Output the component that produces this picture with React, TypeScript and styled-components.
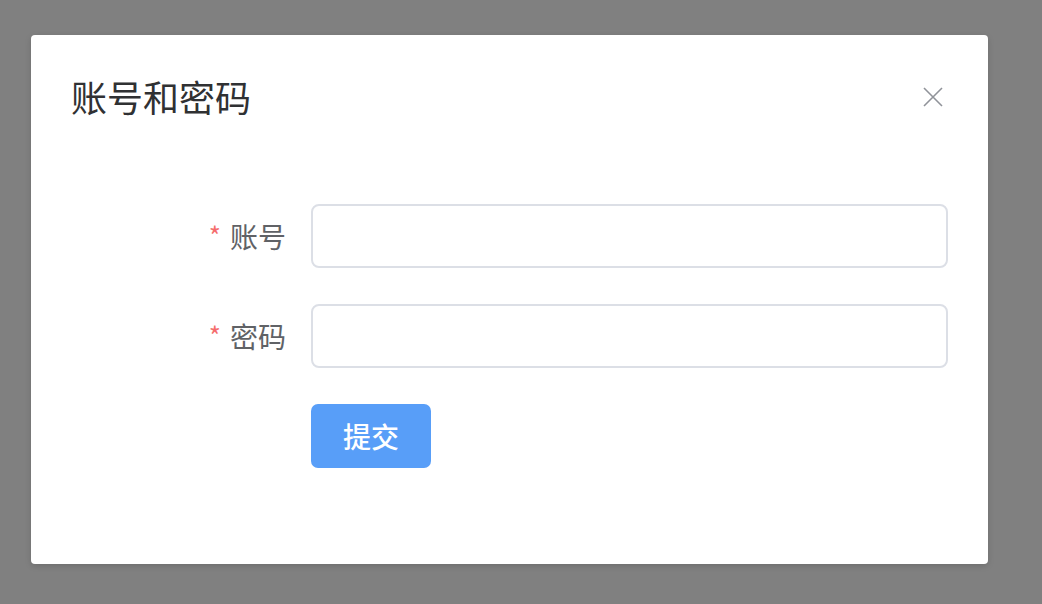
import React from "react";
import styled, { createGlobalStyle } from "styled-components";

const Global = createGlobalStyle`
  html, body { margin: 0; padding: 0; }
  body { background: #808080; font-family: "Noto Sans CJK SC", "Noto Sans", sans-serif; }
`;

const Overlay = styled.div`
  width: 1042px;
  height: 604px;
  background: #808080;
  padding: 35px 0 0 31px;
  box-sizing: border-box;
  overflow: hidden;
`;

const Dialog = styled.div`
  width: 957px;
  height: 529px;
  background: #ffffff;
  border-radius: 4px;
  box-shadow: 0 2px 6px rgba(0, 0, 0, 0.15);
  box-sizing: border-box;
  display: flex;
  flex-direction: column;
`;

const Header = styled.div`
  display: flex;
  align-items: center;
  justify-content: space-between;
  height: 36px;
  padding: 43px 45px 0 40px;
`;

const Title = styled.h2`
  margin: 0;
  font-size: 36px;
  line-height: 36px;
  font-weight: 400;
  color: #303133;
`;

const CloseButton = styled.button`
  border: none;
  background: none;
  padding: 0;
  width: 20px;
  height: 20px;
  margin-top: 2px;
  display: flex;
  cursor: pointer;
`;

const Form = styled.form`
  display: flex;
  flex-direction: column;
  gap: 36px;
  padding: 90px 40px 0 40px;
`;

const Row = styled.div`
  display: flex;
  align-items: center;
  height: 64px;
`;

const Label = styled.label`
  width: 240px;
  height: 64px;
  padding-right: 25px;
  box-sizing: border-box;
  display: flex;
  align-items: center;
  justify-content: flex-end;
  font-size: 28px;
  line-height: 1;
  color: #606266;
`;

const Star = styled.span`
  color: #f56c6c;
  font-size: 26px;
  margin-right: 9px;
  position: relative;
  top: -1px;
`;

const Input = styled.input`
  flex: 1;
  height: 64px;
  box-sizing: border-box;
  border: 2px solid #dcdfe6;
  border-radius: 8px;
  outline: none;
  font-size: 24px;
  padding: 0 24px;
  background: #fff;
`;

const Actions = styled.div`
  display: flex;
  padding-left: 240px;
`;

const Submit = styled.button`
  width: 120px;
  height: 64px;
  border: none;
  border-radius: 7px;
  background: #589ef8;
  color: #ffffff;
  font-family: "Noto Sans CJK SC", "Noto Sans", sans-serif;
  font-size: 28px;
  font-weight: 500;
  line-height: 1;
  padding: 0;
  cursor: pointer;
`;

export default function App() {
  return (
    <>
      <Global />
      <Overlay>
        <Dialog>
          <Header>
            <Title>账号和密码</Title>
            <CloseButton aria-label="关闭">
              <svg width="20" height="20" viewBox="0 0 20 20">
                <path d="M1 1 L19 19 M19 1 L1 19" stroke="#909399" strokeWidth="1.6" fill="none" />
              </svg>
            </CloseButton>
          </Header>
          <Form onSubmit={(e) => e.preventDefault()}>
            <Row>
              <Label>
                <Star>*</Star>账号
              </Label>
              <Input type="text" />
            </Row>
            <Row>
              <Label>
                <Star>*</Star>密码
              </Label>
              <Input type="password" />
            </Row>
            <Actions>
              <Submit type="submit">提交</Submit>
            </Actions>
          </Form>
        </Dialog>
      </Overlay>
    </>
  );
}
